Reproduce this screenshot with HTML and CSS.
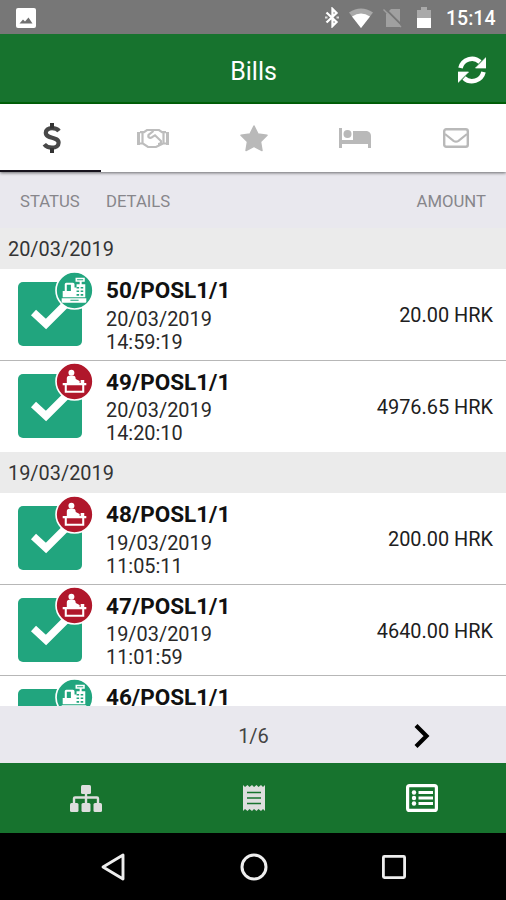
FILE: index.html
```html
<!DOCTYPE html>
<html lang="en">
<head>
<meta charset="utf-8">
<title>Bills</title>
<link rel="stylesheet" href="styles.css">
</head>
<body>
<svg class="sprite" aria-hidden="true">
  <symbol id="check" viewBox="0 0 64 64">
    <rect width="64" height="64" rx="5" fill="#21a57e"/>
    <path d="M15.500 30.500L28 42 L51 19" fill="none" stroke="#fff" stroke-width="7.500"/>
  </symbol>
  <symbol id="register" viewBox="0 0 38 38">
    <circle cx="19" cy="19" r="18" fill="#21a57e" stroke="#fff" stroke-width="1.600"/>
    <g fill="#fff">
      <path d="M7.500 19.500h2V13q0-1.500 1.500-1.500h6.500q1.500 0 1.500 1.500v3h2v-3h3v-2.500h-4V6.500h9v4h-3V13h3.500v12.500h-22z"/>
      <path d="M6.500 26.500h24v3.500q0 1-1 1h-22q-1 0-1-1z"/>
    </g>
    <g fill="#21a57e">
      <path d="M11.500 13.500h4v6h-4zM21.500 8h6v1h-6zM21 15.500h2.500v1.500h-2.500zM25 15.500h2.500v1.500h-2.500zM21 19h2.500v1.500h-2.500zM25 19h2.500v1.500h-2.500zM21 22.500h2.500v1.500h-2.500zM25 22.500h2.500v1.500h-2.500zM15 28h8v1h-8z"/>
    </g>
  </symbol>
  <symbol id="desk" viewBox="0 0 38 38">
    <circle cx="19" cy="19" r="18" fill="#b0172b" stroke="#fff" stroke-width="1.600"/>
    <g fill="#fff">
      <circle cx="16" cy="10.500" r="2.900"/>
      <path d="M11.500 20.500v-4.500q0-2.500 2.500-2.500h4q2 0 2.200 3l3.800 2v2zM25 17.500h3.500v3H25zM7.500 20.500h23v2.200h-23z"/>
      <path d="M9.500 22.500h2V28h15v-5.500h2v7.500h-19z"/>
    </g>
  </symbol>
</svg>

<div class="screen">
  <div class="status">
    <svg width="20" height="20" viewBox="0 0 20 20"><rect width="20" height="20" rx="2" fill="#fff"/><path d="M3.500 15.500l3.500-4 2 2 3.500-4 4 6z" fill="#707070"/></svg>
    <div class="status-right">
      <svg class="bt" width="15" height="21" viewBox="0 0 15 21"><path d="M1.500 5.500l10 9.500L7.500 19V2L11.500 6l-10 9.500" fill="none" stroke="#fff" stroke-width="2.300"/><path d="M0 10.500h2.500M11.500 10.500h2.500" stroke="#ddd" stroke-width="2"/></svg>
      <svg class="wifi" width="24" height="20" viewBox="0 0 24 20"><path d="M0 4.500Q12-3.500 24 4.500L12 20z" fill="#a9a9a9"/><path d="M3 8.500Q12 2.500 21 8.500L12 20z" fill="#fff"/></svg>
      <svg class="sim" width="20" height="20" viewBox="0 0 20 20"><path d="M3 6l5-5h9v18H3z" fill="#a0a0a0"/><path d="M1.500 0L20 18.500" stroke="#777" stroke-width="2"/><path d="M.5 1.500L18 19" stroke="#a0a0a0" stroke-width="1.500"/></svg>
      <svg class="battery" width="14" height="21" viewBox="0 0 14 21"><path d="M0 3h4V0h6v3h4v8H0z" fill="#a9a9a9"/><path d="M0 11h14v10H0z" fill="#fff"/></svg>
      <span class="clock">15:14</span>
    </div>
  </div>

  <header class="header">
    <h1>Bills</h1>
    <svg class="refresh" width="28" height="28" viewBox="0 0 28 28"><path d="M2.500 12A11.800 11.800 0 0 1 22 6M25.500 16A11.800 11.800 0 0 1 6 22" fill="none" stroke="#fff" stroke-width="4.600"/><path d="M28 1.500V12H17.500zM0 26.500V16h10.500z" fill="#fff" stroke="#fff" stroke-width=".7" stroke-linejoin="round"/></svg>
  </header>

  <nav class="tabs">
    <a class="tab active"><svg width="20" height="32" viewBox="0 0 20 32"><path d="M17 9C15.500 7 13 6.200 10 6.200c-4 0-6.200 2-6.200 4.600 0 6.400 12.800 3.400 12.800 9.900 0 3-2.600 5-6.600 5-3.300 0-6-1.300-7.700-3.500" fill="none" stroke="#484848" stroke-width="4.200"/><path d="M10 1v5.500M10 26v5" stroke="#333" stroke-width="4"/></svg></a>
    <a class="tab"><svg width="32" height="21" viewBox="0 0 32 21"><path d="M1.500 4v13M30.500 4v13" stroke="#bdbdbd" stroke-width="3"/><path d="M3 4.200h4L10 2h12l3 2.200h4M3 15.500h3l5 3.500h8l7-3.500h3M5.500 4.500v11M26.500 4.500v11M16.500 3L11.500 7c-.8 3 2.200 3.800 4.500 1.500l2-1.200 6 5.700c.5 2-1 3-3 3" fill="none" stroke="#bdbdbd" stroke-width="2.200"/></svg></a>
    <a class="tab"><svg width="28" height="27" viewBox="0 0 28 27"><path d="M14 1l4 8 9 1.300-6.500 6.300L22 25.500 14 21.300 6 25.500l1.500-8.900L1 10.300 10 9z" fill="#b9b9b9" stroke="#b9b9b9" stroke-width="1.500" stroke-linejoin="round"/></svg></a>
    <a class="tab"><svg width="32" height="20" viewBox="0 0 32 20"><path d="M0 0h3v12h11V3h14q4 1 4 5v12h-3v-4H3v4H0z" fill="#b9b9b9"/><circle cx="8.500" cy="6" r="4" fill="#b9b9b9"/></svg></a>
    <a class="tab"><svg width="26" height="20" viewBox="0 0 26 20"><rect x="1.200" y="1.200" width="23.600" height="17.600" rx="2" fill="none" stroke="#b9b9b9" stroke-width="2.400"/><path d="M2 6l8.500 6.800q2.500 1.700 5 0L24 6" fill="none" stroke="#b9b9b9" stroke-width="2.200"/></svg></a>
  </nav>

  <div class="columns"><span class="c-status">STATUS</span><span class="c-details">DETAILS</span><span class="c-amount">AMOUNT</span></div>

  <main class="list">
    <h2 class="date">20/03/2019</h2>
    <article class="bill ruled">
      <div class="icon"><svg class="box"><use href="#check"/></svg><svg class="badge"><use href="#register"/></svg></div>
      <div class="details"><strong>50/POSL1/1</strong><span>20/03/2019</span><span class="time">14:59:19</span></div>
      <div class="amount">20.00 HRK</div>
    </article>
    <article class="bill">
      <div class="icon"><svg class="box"><use href="#check"/></svg><svg class="badge"><use href="#desk"/></svg></div>
      <div class="details"><strong>49/POSL1/1</strong><span>20/03/2019</span><span class="time">14:20:10</span></div>
      <div class="amount">4976.65 HRK</div>
    </article>
    <h2 class="date">19/03/2019</h2>
    <article class="bill ruled">
      <div class="icon"><svg class="box"><use href="#check"/></svg><svg class="badge"><use href="#desk"/></svg></div>
      <div class="details"><strong>48/POSL1/1</strong><span>19/03/2019</span><span class="time">11:05:11</span></div>
      <div class="amount">200.00 HRK</div>
    </article>
    <article class="bill ruled">
      <div class="icon"><svg class="box"><use href="#check"/></svg><svg class="badge"><use href="#desk"/></svg></div>
      <div class="details"><strong>47/POSL1/1</strong><span>19/03/2019</span><span class="time">11:01:59</span></div>
      <div class="amount">4640.00 HRK</div>
    </article>
    <article class="bill">
      <div class="icon"><svg class="box"><use href="#check"/></svg><svg class="badge"><use href="#register"/></svg></div>
      <div class="details"><strong>46/POSL1/1</strong></div>
    </article>
  </main>

  <div class="pager">
    <span></span><span class="page">1/6</span>
    <span><svg width="16" height="26" viewBox="0 0 16 26"><path d="M2 2.500L12.500 13 2 23.500" fill="none" stroke="#000" stroke-width="4.200"/></svg></span>
  </div>

  <nav class="bottom">
    <a><svg width="32" height="27" viewBox="0 0 32 27"><g fill="#dedede"><rect x="11" width="10" height="9" rx="1.500"/><rect y="18" width="8.500" height="9" rx="1.500"/><rect x="11.500" y="18" width="9" height="9" rx="1.500"/><rect x="23.500" y="18" width="8.500" height="9" rx="1.500"/></g><path d="M16 8v10M4 18v-4.500q0-1 1-1h22q1 0 1 1V18" fill="none" stroke="#dedede" stroke-width="2.400"/></svg></a>
    <a><svg width="22" height="26" viewBox="0 0 22 26"><path d="M0 0l2 2 2.500-2 2 2 2.500-2 2 2 2.500-2 2 2L18 0l2 2 2-2v26l-2-2-2 2-2.500-2-2 2-2.500-2-2 2-2.500-2-2 2L2 24l-2 2z" fill="#dedede"/><path d="M4 7.500h14M4 13h14M4 18.500h14" stroke="#17732e" stroke-width="1.500"/></svg></a>
    <a><svg width="32" height="28" viewBox="0 0 32 28"><rect x="1.600" y="1.600" width="28.800" height="24.800" rx="2" fill="none" stroke="#fff" stroke-width="3.200"/><path d="M12.500 8.500H27M12.500 14H27M12.500 19.500H27" stroke="#fff" stroke-width="3"/><g fill="#fff"><circle cx="8" cy="8.500" r="2.200"/><circle cx="8" cy="14" r="2.200"/><circle cx="8" cy="19.500" r="2.200"/></g></svg></a>
  </nav>

  <div class="system">
    <svg width="24" height="28" viewBox="0 0 24 28"><path d="M22 2v24L2 14z" fill="none" stroke="#eee" stroke-width="2.900" stroke-linejoin="round"/></svg>
    <svg width="28" height="28" viewBox="0 0 28 28"><circle cx="14" cy="14" r="12" fill="none" stroke="#eee" stroke-width="3"/></svg>
    <svg width="24" height="24" viewBox="0 0 24 24"><rect x="1.400" y="1.400" width="21.200" height="21.200" rx="1" fill="none" stroke="#eee" stroke-width="2.800"/></svg>
  </div>
</div>
</body>
</html>
```
FILE: styles.css
```css
* { box-sizing: border-box; }
body { margin: 0; font-family: Roboto, "Liberation Sans", sans-serif; background: #000; }
svg { display: block; flex: none; }
.sprite { position: absolute; width: 0; height: 0; }
.screen { width: 506px; height: 900px; display: flex; flex-direction: column; overflow: hidden; background: #fff; }

.status { height: 34px; flex: none; background: #777; display: flex; justify-content: space-between; align-items: center; padding: 1px 9px 0 16px; }
.status-right { display: flex; align-items: center; color: #fff; }
.wifi { margin-left: 9px; }
.sim { margin-left: 10px; }
.battery { margin-left: 14px; }
.clock { width: 51px; margin: 2px 0 0 15px; font-size: 19.500px; line-height: 24px; font-weight: 500; }

.header { height: 70px; flex: none; background: #17732e; border-bottom: 2px solid #006409; display: grid; grid-template-columns: 1fr auto 1fr; align-items: center; }
.header h1 { grid-column: 2; margin: 7px 0 0 1px; color: #fff; font-size: 25px; line-height: 30px; font-weight: 400; }
.refresh { justify-self: end; margin-right: 20px; margin-top: 3px; }

.tabs { height: 68px; flex: none; display: grid; grid-template-columns: repeat(5, 1fr); background: #fff; box-shadow: 0 1px 3px rgba(0, 0, 0, .55); z-index: 1; }
.tab { display: flex; align-items: center; justify-content: center; border-bottom: 2px solid transparent; padding: 2px 0 0 2px; }
.tab.active { border-bottom-color: #17131d; }

.columns { height: 56px; flex: none; background: #e9e8ee; display: flex; align-items: center; padding: 2px 20px 0; font-size: 16.700px; color: #87868b; }
.c-status { width: 86px; }
.c-details { flex: 1; }

.list { height: 478px; flex: none; overflow: hidden; background: #fff; }
.date { margin: 0; height: 41px; padding: 2px 8px 0; background: #ebebeb; color: #343434; font-size: 19.900px; line-height: 40px; font-weight: 400; }
.bill { height: 91.500px; display: flex; }
.ruled { border-bottom: 1.500px solid #b7b7b7; }
.icon { position: relative; width: 106px; flex: none; padding: 13px 0 0 18px; }
.box { width: 64px; height: 64px; }
.badge { position: absolute; left: 55px; top: 1.500px; width: 39px; height: 39px; }
.details { flex: 1; display: flex; flex-direction: column; padding-top: 8px; font-size: 19.900px; line-height: 23px; color: #292929; }
.details strong { font-size: 22.500px; line-height: 26px; color: #111; margin-bottom: 4.500px; }
.amount { padding: 35px 13px 0 0; font-size: 19.900px; line-height: 24px; color: #202020; }

.pager { height: 57px; flex: none; background: #e9e8ee; display: grid; grid-template-columns: repeat(3, 1fr); align-items: center; justify-items: center; padding: 2px 0 0 1px; font-size: 20px; color: #444; }
.bottom { height: 70px; flex: none; background: #17732e; display: grid; grid-template-columns: repeat(3, 1fr); align-items: center; justify-items: center; padding-left: 2px; }
.system { flex: 1; background: #000; display: flex; align-items: center; justify-content: space-between; padding: 0 100px 0 101px; }
```
